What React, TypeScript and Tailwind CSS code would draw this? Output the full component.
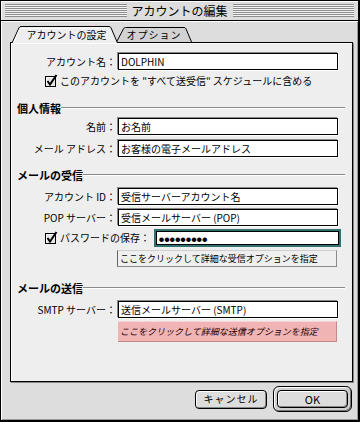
import React from 'react';

function Field({ value, className = '' }: { value: React.ReactNode; className?: string }) {
  return (
    <div className={`h-[17px] w-[220px] bg-white border border-black shadow-[-1px_-1px_0_#8a8a8a,1px_1px_0_#fff] flex items-center px-[2px] text-[10px] leading-none text-black ${className}`}>
      {value}
    </div>
  );
}

function Row({ label, value, className = '' }: { label: string; value: React.ReactNode; className?: string }) {
  return (
    <div className={`flex items-center ${className}`}>
      <div className="w-[99px] text-right text-[10px] leading-none whitespace-nowrap">{label}</div>
      <div className="ml-[2px]">
        <Field value={value} />
      </div>
    </div>
  );
}

function Check() {
  return (
    <svg width="14" height="14" viewBox="0 0 14 14" className="shrink-0">
      <rect x="0.5" y="2.5" width="10" height="10" fill="#e6e6e6" stroke="#000" />
      <path d="M1.5 11.5 L1.5 3.5 L9.5 3.5" fill="none" stroke="#fff" />
      <path d="M2.5 7 L5 10.5 L11.5 1" fill="none" stroke="#000" strokeWidth="2" />
    </svg>
  );
}

function Heading({ title, className = '' }: { title: string; className?: string }) {
  return (
    <div className={`flex items-center h-[14px] pr-[7px] ${className}`}>
      <span className="text-[11px] font-bold leading-none whitespace-nowrap">{title}</span>
      <div className="flex-1 h-[2px] border-t border-[#8a8a8a] border-b border-b-white" />
    </div>
  );
}

export default function App() {
  return (
    <div className="w-[363px] h-[422px] bg-white [font-family:'Noto_Sans_CJK_JP','Noto_Sans',sans-serif] text-black">
      <div className="w-[360px] h-[422px] border-l border-t border-black border-r-2 border-b-2 bg-[#dddddd] flex flex-col">
        {/* title bar */}
        <div className="h-[20px] flex items-center px-[4px] gap-[4px] border-b border-black shadow-[inset_1px_1px_0_#fff]">
          <div className="flex-1 h-[13px] bg-[repeating-linear-gradient(to_bottom,#8c8c8c_0px,#8c8c8c_1px,#f4f4f4_1px,#f4f4f4_2px)]" />
          <span className="text-[12px] leading-none px-[1px]">アカウントの編集</span>
          <div className="flex-1 h-[13px] bg-[repeating-linear-gradient(to_bottom,#8c8c8c_0px,#8c8c8c_1px,#f4f4f4_1px,#f4f4f4_2px)]" />
        </div>

        <div className="flex-1 flex flex-col pl-[9px] pr-[5px] pt-[5px] shadow-[inset_1px_1px_0_#fff,inset_-1px_-1px_0_#999]">
          {/* tabs */}
          <div className="flex items-end h-[16px] pl-[1px]">
            <div className="relative w-[107px] h-[17px] -mb-px z-10 flex items-center justify-center pl-[4px]">
              <svg className="absolute inset-0" width="107" height="17" viewBox="0 0 107 17">
                <path d="M1 17 L8 1.8 Q8.7 0.5 10 0.5 L98 0.5 Q99.3 0.5 100 1.8 L106.5 17" fill="#eeeeee" stroke="#000" />
                <path d="M2.5 17 L9 2.5 L98 1.5" fill="none" stroke="#fff" />
              </svg>
              <span className="relative text-[10px] leading-none">アカウントの設定</span>
            </div>
            <div className="relative w-[76px] h-[15px] -ml-[2px] flex items-center justify-center">
              <svg className="absolute inset-0" width="76" height="15" viewBox="0 0 76 15">
                <path d="M0.5 15 L7.5 1.8 Q8.2 0.5 9.5 0.5 L68 0.5 Q69.3 0.5 70 1.8 L75.5 15" fill="#d2d2d2" stroke="#000" />
              </svg>
              <span className="relative text-[10px] leading-none tracking-[1px]">オプション</span>
            </div>
          </div>

          {/* panel */}
          <div className="w-[343px] h-[340px] bg-[#eeeeee] border border-black shadow-[1px_1px_0_#888,inset_1px_1px_0_#fff] pl-[6px] flex flex-col">
            <Row label="アカウント名：" value="DOLPHIN" className="mt-[10px]" />
            <div className="flex items-center h-[13px] mt-[4px] pl-[28px] gap-[1px]">
              <Check />
              <span className="text-[10px] leading-none whitespace-nowrap">このアカウントを "すべて送受信" スケジュールに含める</span>
            </div>

            <Heading title="個人情報" className="mt-[14px]" />
            <Row label="名前：" value="お名前" className="mt-[3px]" />
            <Row label="メール アドレス：" value="お客様の電子メールアドレス" className="mt-[5px]" />

            <Heading title="メールの受信" className="mt-[11px]" />
            <Row label="アカウント ID：" value="受信サーバーアカウント名" className="mt-[6px]" />
            <Row label="POP サーバー：" value="受信メールサーバー (POP)" className="mt-[4px]" />
            <div className="flex items-center h-[18px] mt-[3px] pl-[28px]">
              <Check />
              <span className="ml-[1px] w-[94px] text-[10px] leading-none whitespace-nowrap">パスワードの保存：</span>
              <div className="p-[2px] bg-[#2f7070]">
                <div className="h-[14px] w-[183px] bg-white border border-black flex items-center px-[2px] text-[5px] tracking-[0.4px] leading-none">●●●●●●●●●</div>
              </div>
            </div>
            <div className="mt-[3px] ml-[100px] w-[220px] h-[17px] bg-[#efefef] border border-[#8a8a8a] border-t-[#cfcfcf] border-l-[#666] flex items-center pl-[2px] text-[9px] leading-none whitespace-nowrap">
              ここをクリックして詳細な受信オプションを指定
            </div>

            <Heading title="メールの送信" className="mt-[14px]" />
            <Row label="SMTP サーバー：" value="送信メールサーバー (SMTP)" className="mt-[6px]" />
            <div className="mt-[3px] ml-[101px] w-[219px] h-[21px] bg-[#f0b4b4] border-b border-r border-[#c58888] border-t border-t-[#f8d6d6] flex items-center pl-[2px] text-[9px] italic text-[#1e0000] leading-none whitespace-nowrap">
              ここをクリックして詳細な送信オプションを指定
            </div>
          </div>

          {/* buttons */}
          <div className="flex justify-end items-center gap-[6px] mt-[4px] pr-[1px]">
            <div className="w-[72px] h-[19px] rounded-[4px] border border-black bg-[#dddddd] shadow-[inset_1px_1px_0_#fff,inset_-1px_-1px_0_#888] flex items-center justify-center text-[10px] leading-none tracking-[1px]">
              キャンセル
            </div>
            <div className="w-[79px] h-[26px] rounded-[6px] border border-black bg-[#cfcfcf] shadow-[inset_1px_1px_0_#fff,inset_-1px_-1px_0_#777] p-[3px]">
              <div className="w-full h-full rounded-[4px] border border-black bg-[#dddddd] shadow-[inset_1px_1px_0_#fff,inset_-1px_-1px_0_#888] flex items-center justify-center text-[11px] leading-none">
                OK
              </div>
            </div>
          </div>
        </div>
      </div>
    </div>
  );
}
